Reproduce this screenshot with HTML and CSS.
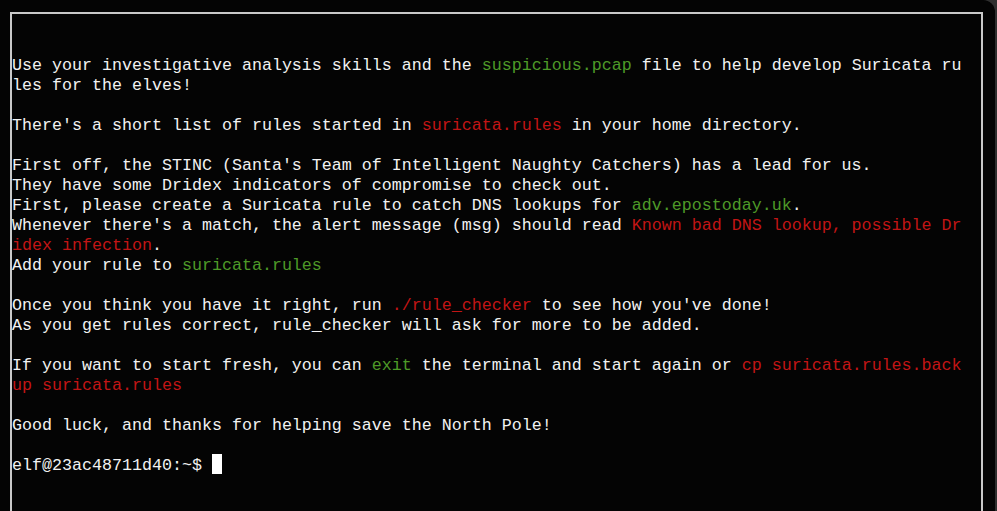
FILE: index.html
```html
<!doctype html>
<html>

<head>
	<meta charset="UTF-8">
	<meta name="viewport" content="width=device-width, initial-scale=1.0">
	<title>Suricata terminal</title>
	<link rel="stylesheet" href="styles.css">
</head>

<body>

	<!-- terminal window -->
	<div class="screen">
		<div class="term">
			<div class="line"> </div>
			<div class="line"> </div>
			<div class="line">Use your investigative analysis skills and the <span class="green">suspicious.pcap</span> file to help develop Suricata ru</div>
			<div class="line">les for the elves!</div>
			<div class="line"> </div>
			<div class="line">There's a short list of rules started in <span class="red">suricata.rules</span> in your home directory.</div>
			<div class="line"> </div>
			<div class="line">First off, the STINC (Santa's Team of Intelligent Naughty Catchers) has a lead for us.</div>
			<div class="line">They have some Dridex indicators of compromise to check out.</div>
			<div class="line">First, please create a Suricata rule to catch DNS lookups for <span class="green">adv.epostoday.uk</span>.</div>
			<div class="line">Whenever there's a match, the alert message (msg) should read <span class="red">Known bad DNS lookup, possible Dr</span></div>
			<div class="line"><span class="red">idex infection</span>.</div>
			<div class="line">Add your rule to <span class="green">suricata.rules</span></div>
			<div class="line"> </div>
			<div class="line">Once you think you have it right, run <span class="red">./rule_checker</span> to see how you've done!</div>
			<div class="line">As you get rules correct, rule_checker will ask for more to be added.</div>
			<div class="line"> </div>
			<div class="line">If you want to start fresh, you can <span class="green">exit</span> the terminal and start again or <span class="red">cp suricata.rules.back</span></div>
			<div class="line"><span class="red">up suricata.rules</span></div>
			<div class="line"> </div>
			<div class="line">Good luck, and thanks for helping save the North Pole!</div>
			<div class="line"> </div>
			<div class="line">elf@23ac48711d40:~$ <span class="cursor"> </span></div>
			<div class="line"> </div>
			<div class="line"> </div>
		</div>
	</div>

</body>

</html>
```

FILE: styles.css
```css
body {
	margin: 0;
	padding: 0;
	background: #2f2f2f;
	overflow: hidden;
}

.screen {
	height: 511px;
	margin-right: 2px;
	padding: 12px 12px 0 10px;
	background: #040404;
	border-top-right-radius: 12px;
	overflow: hidden;
}

.term {
	border: 2px solid #c9c9c9;
	border-bottom: none;
	height: 100%;
	font-family: "Courier New", "Liberation Mono", monospace;
	font-size: 16.6667px;
	line-height: 24px;
	color: #f2f2f2;
}

/* one terminal row, 20px tall; text sits a little low like xterm */
.line {
	height: 20px;
	white-space: pre;
}

.green {
	color: #4e9a28;
}

.red {
	color: #c21515;
}

.cursor {
	display: inline-block;
	width: 10px;
	height: 20px;
	vertical-align: top;
	background: #ffffff;
}
```
